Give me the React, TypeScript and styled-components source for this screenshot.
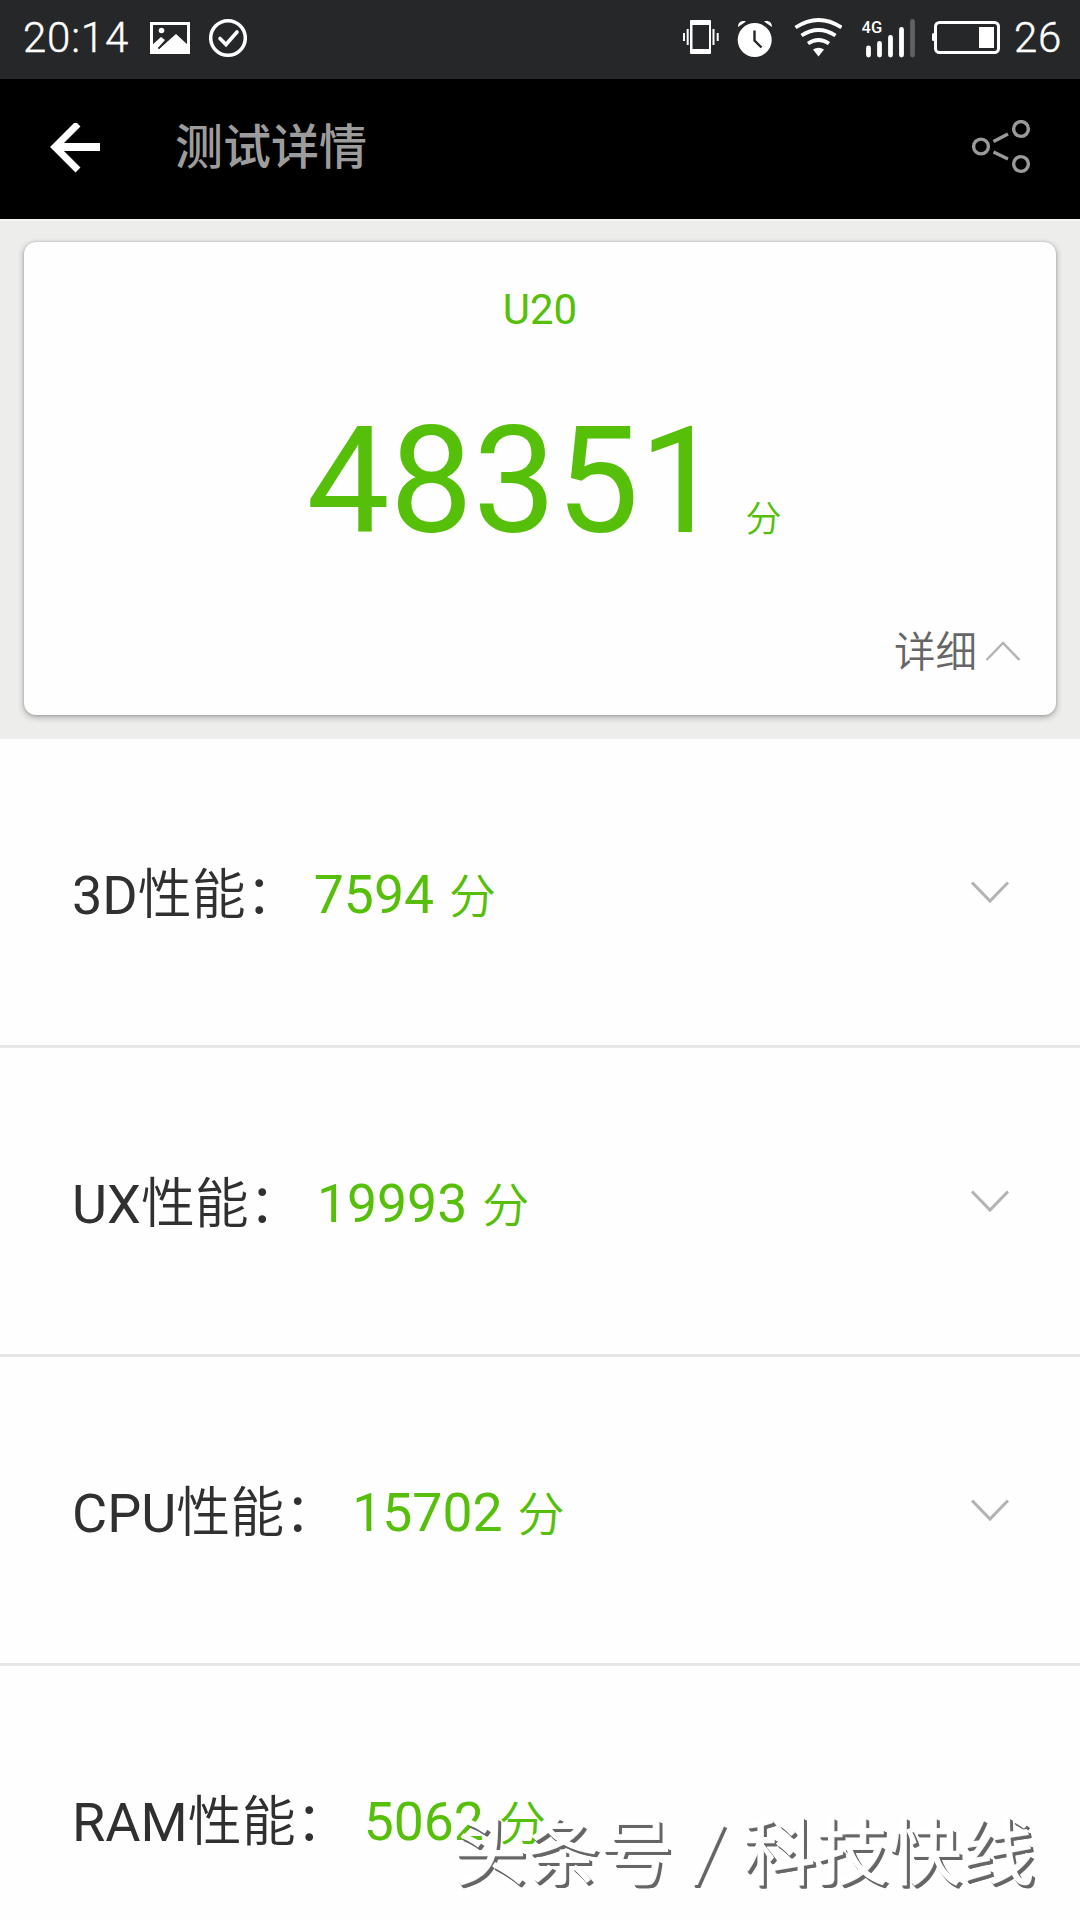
import React from "react";
import styled, { createGlobalStyle } from "styled-components";

const GREEN = "#55bf0a";

const GlobalStyle = createGlobalStyle`
  * { box-sizing: border-box; }
  body {
    margin: 0;
    background: #fff;
    font-family: Roboto, "Noto Sans CJK SC", sans-serif;
  }
`;

const Screen = styled.div`
  position: relative;
  display: flex;
  flex-direction: column;
  width: 1080px;
  height: 1920px;
  overflow: hidden;
  background: #fefefe;

  & > * { flex: none; }
`;

const StatusBar = styled.header`
  display: flex;
  justify-content: space-between;
  height: 79px;
  padding: 0 18px 0 23px;
  background: #262729;
  color: #fff;
`;

const StatusGroup = styled.div`
  display: flex;
`;

const StatusText = styled.span<{ $width: number; $gap?: number }>`
  width: ${(p) => p.$width}px;
  margin-left: ${(p) => p.$gap ?? 0}px;
  font-size: 42px;
  font-weight: 300;
  line-height: 75px;
  letter-spacing: 0.8px;
  white-space: nowrap;
  -webkit-text-stroke: 0.4px #fff;
`;

const StatusIcon = styled.svg<{ $gap?: number }>`
  flex: none;
  display: block;
  height: 79px;
  margin-left: ${(p) => p.$gap ?? 0}px;
`;

const TitleBar = styled.nav`
  display: flex;
  align-items: center;
  height: 140px;
  padding: 0 48px;
  background: #000;
`;

const Title = styled.h1`
  flex: 1;
  margin: 0 0 2px 73px;
  color: #9c9c9c;
  font-size: 48px;
  font-weight: 500;
  line-height: 70px;
`;

const Icon = styled.svg<{ $lift?: number }>`
  flex: none;
  display: block;
  margin-bottom: ${(p) => p.$lift ?? 0}px;
`;

const Summary = styled.section`
  height: 520px;
  padding: 21px 24px 24px;
  border-top: 2px solid #f4f4f3;
  background: #ededec;
`;

const Card = styled.div`
  display: flex;
  flex-direction: column;
  align-items: center;
  height: 473px;
  padding-top: 38px;
  border-radius: 12px;
  background: #fefefe;
  box-shadow: 0 2px 6px rgba(0, 0, 0, 0.34), 0 0 2px rgba(0, 0, 0, 0.2);
`;

const Device = styled.div`
  color: ${GREEN};
  font-size: 42px;
  line-height: 60px;
`;

const Total = styled.div`
  display: flex;
  align-items: baseline;
  margin: 52px 0 0 8px;
  color: ${GREEN};
  line-height: 180px;
`;

const TotalNumber = styled.span`
  font-size: 148px;
`;

const TotalUnit = styled.span`
  margin-left: 23px;
  font-size: 36px;
  font-weight: 350;
`;

const Details = styled.div`
  display: flex;
  align-items: center;
  align-self: flex-end;
  gap: 8px;
  margin: 13px 35px 0 0;
  color: #666;
  font-size: 41.500px;
  font-weight: 350;
  line-height: 60px;
`;

const Row = styled.div`
  display: flex;
  align-items: center;
  height: 309px;
  padding: 7px 70px 0 72px;
  border-bottom: 3px solid #e6e6e6;
  font-size: 53.500px;
  line-height: 80px;
`;

const Label = styled.span`
  color: #303030;
  font-size: 54px;
`;

const Cjk = styled.span`
  font-weight: 350;
`;

const Score = styled.span`
  flex: 1;
  margin-left: 14px;
  color: ${GREEN};
`;

const Unit = styled(Cjk)`
  margin-left: 15px;
  font-size: 47px;
`;

const Watermark = styled.div`
  position: absolute;
  left: 453px;
  top: 1793px;
  display: flex;
  align-items: center;
  color: #fff;
  font-family: "Noto Sans CJK SC", sans-serif;
  font-size: 73px;
  line-height: 106px;
  text-shadow: 1px 1px 0 #f8f8f8, 2px 3px 0 #666, 3px 4px 0 #666, 4px 4px 0 #666;
`;

const Slash = styled.span`
  width: 70px;
  padding-left: 5px;
  text-align: center;
  font-size: 62px;
  transform: skewX(-8deg);
`;

const rows = [
  { name: "3D", score: "7594" },
  { name: "UX", score: "19993" },
  { name: "CPU", score: "15702" },
  { name: "RAM", score: "5062", last: true },
];

const Chevron = () => (
  <Icon $lift={4} width="40" height="26" viewBox="0 0 40 26" fill="none" stroke="#b3b3b3" strokeWidth="3">
    <path d="M2 1.5 20 20 38 1.5" />
  </Icon>
);

export default function App() {
  return (
    <>
      <GlobalStyle />
      <Screen>
        <StatusBar>
          <StatusGroup>
            <StatusText $width={127}>20:14</StatusText>
            <StatusIcon width="40" viewBox="150 0 40 79">
              <path d="M151.5 23.5h37v29h-37z" fill="none" stroke="#fff" strokeWidth="3" />
              <circle cx="161.5" cy="30.5" r="2.8" fill="#fff" />
              <path d="M151 46l10-9 4 3-7 8 1 1 17-15 13 12v8h-38z" fill="#fff" />
              <path d="M158.500 48.500l8-7.500" stroke="#262729" strokeWidth="1.600" fill="none" />
            </StatusIcon>
            <StatusIcon $gap={19} width="38" viewBox="209 0 38 79" fill="none" stroke="#fff">
              <circle cx="228" cy="38" r="17.300" strokeWidth="3.500" />
              <path d="M220 38.500l6 6L237 32" strokeWidth="3.600" strokeLinecap="round" />
            </StatusIcon>
          </StatusGroup>
          <StatusGroup>
            <StatusIcon width="36" viewBox="683 0 36 79" stroke="#fff" fill="none">
              <rect x="690" y="20" width="21" height="34" rx="1" fill="#fff" stroke="none" />
              <rect x="692.500" y="25" width="16.500" height="24" fill="#262729" stroke="none" />
              <path d="M687.700 29v16M684 33v8M713.500 29v16M717.700 33v8" strokeWidth="2" />
            </StatusIcon>
            <StatusIcon $gap={18} width="35" viewBox="737 0 35 79">
              <path d="M738 27c0-5 4-7 8-5.500zM772 27c0-5-4-7-8-5.500z" fill="#fff" />
              <circle cx="754.700" cy="40" r="17" fill="#fff" />
              <path d="M754.500 30.500v10l7 7" fill="none" stroke="#262729" strokeWidth="2.400" />
            </StatusIcon>
            <StatusIcon $gap={22} width="48" viewBox="794 0 48 79" fill="none" stroke="#fff" strokeWidth="3.800">
              <path d="M795.500 27.500q23-15 46 0M801.500 35.500q17-11 34 0M808 43.500q10.500-7 21 0" />
              <path d="M813 49.500q5.500-3.500 11 0l-5.500 7z" fill="#fff" stroke="none" />
            </StatusIcon>
            <StatusIcon $gap={20} width="54" viewBox="862 0 54 79">
              <text x="861.500" y="33" fontFamily="Roboto, sans-serif" fontSize="16.500" fontWeight="500" fill="#fff">4G</text>
              <path d="M868.500 48v7M879.500 43.500v11.500M890.500 37.500v17.500M901.500 29.500v25.500" stroke="#fff" strokeWidth="4.800" strokeLinecap="round" />
              <path d="M912.500 21.500v33.500" stroke="#616163" strokeWidth="4.800" strokeLinecap="round" />
            </StatusIcon>
            <StatusIcon $gap={16} width="68" viewBox="932 0 68 79">
              <rect x="935.500" y="22.500" width="63" height="30" rx="4" fill="none" stroke="#fff" strokeWidth="3" />
              <rect x="932" y="33" width="3" height="8" rx="1.500" fill="#fff" />
              <rect x="979" y="27" width="15" height="21" fill="#fff" />
            </StatusIcon>
            <StatusText $width={48} $gap={14}>26</StatusText>
          </StatusGroup>
        </StatusBar>

        <TitleBar>
          <Icon width="54" height="52" viewBox="48 123 54 52" fill="none" stroke="#fff">
            <path d="M100 147H56" strokeWidth="8" />
            <path d="M78 124 55 147 78 170" strokeWidth="7" />
          </Icon>
          <Title>测试详情</Title>
          <Icon width="62" height="58" viewBox="970 120 62 58" fill="none" stroke="#9a9a9a" strokeWidth="3.400">
            <circle cx="981" cy="146.500" r="7.400" />
            <circle cx="1021" cy="129" r="7.400" />
            <circle cx="1021" cy="164" r="7.400" />
            <path d="M993.500 141.500 1008 134M993.500 152 1008 159" />
          </Icon>
        </TitleBar>

        <Summary>
          <Card>
            <Device>U20</Device>
            <Total>
              <TotalNumber>48351</TotalNumber>
              <TotalUnit>分</TotalUnit>
            </Total>
            <Details>
              详细
              <Icon $lift={4} width="36" height="22" viewBox="0 0 36 22" fill="none" stroke="#b3b3b3" strokeWidth="2.500">
                <path d="M1.500 20 18 3 34.500 20" />
              </Icon>
            </Details>
          </Card>
        </Summary>

        {rows.map((r) => (
          <Row key={r.name}>
            <Label>
              {r.name}
              <Cjk>性能：</Cjk>
            </Label>
            <Score>
              {r.score}
              <Unit>分</Unit>
            </Score>
            {!r.last && <Chevron />}
          </Row>
        ))}

        <Watermark>
          头条号<Slash>/</Slash>科技快线
        </Watermark>
      </Screen>
    </>
  );
}
